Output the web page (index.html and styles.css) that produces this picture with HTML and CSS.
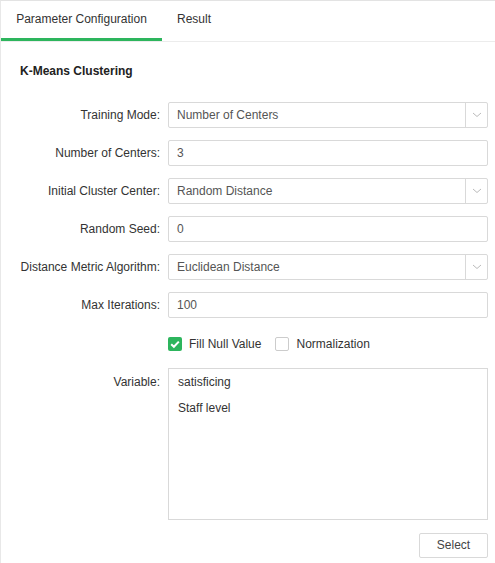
FILE: index.html
```html
<!DOCTYPE html>
<html>
<head>
<meta charset="utf-8">
<link rel="stylesheet" href="styles.css">
</head>
<body>
<div class="panel">
  <div class="tabs">
    <div class="tab active">Parameter Configuration</div>
    <div class="tab">Result</div>
  </div>
  <div class="content">
    <div class="title">K-Means Clustering</div>
    <div class="form">
      <div class="row">
        <div class="label">Training Mode:</div>
        <div class="field select"><span class="val">Number of Centers</span><span class="arrow"><svg width="10" height="6" viewBox="0 0 10 6"><path d="M1 1 L5 4.5 L9 1" fill="none" stroke="#bbb" stroke-width="1"/></svg></span></div>
      </div>
      <div class="row">
        <div class="label">Number of Centers:</div>
        <div class="field"><span class="val">3</span></div>
      </div>
      <div class="row">
        <div class="label">Initial Cluster Center:</div>
        <div class="field select"><span class="val">Random Distance</span><span class="arrow"><svg width="10" height="6" viewBox="0 0 10 6"><path d="M1 1 L5 4.5 L9 1" fill="none" stroke="#bbb" stroke-width="1"/></svg></span></div>
      </div>
      <div class="row">
        <div class="label">Random Seed:</div>
        <div class="field"><span class="val">0</span></div>
      </div>
      <div class="row">
        <div class="label">Distance Metric Algorithm:</div>
        <div class="field select"><span class="val">Euclidean Distance</span><span class="arrow"><svg width="10" height="6" viewBox="0 0 10 6"><path d="M1 1 L5 4.5 L9 1" fill="none" stroke="#bbb" stroke-width="1"/></svg></span></div>
      </div>
      <div class="row">
        <div class="label">Max Iterations:</div>
        <div class="field"><span class="val">100</span></div>
      </div>
      <div class="row checks">
        <div class="label"></div>
        <div class="checkgroup">
          <span class="check on"><svg width="14" height="14" viewBox="0 0 14 14"><path d="M3.2 7.2 L5.9 9.8 L10.8 4.6" fill="none" stroke="#fff" stroke-width="2"/></svg></span>
          <span class="ctext">Fill Null Value</span>
          <span class="check"></span>
          <span class="ctext">Normalization</span>
        </div>
      </div>
      <div class="row var">
        <div class="label">Variable:</div>
        <div class="listbox">
          <div class="item">satisficing</div>
          <div class="item">Staff level</div>
        </div>
      </div>
      <div class="actions">
        <div class="btn">Select</div>
      </div>
    </div>
  </div>
</div>
</body>
</html>
```
FILE: styles.css
```css
html, body {
  margin: 0;
  padding: 0;
  background: #fff;
}
body {
  font-family: "Liberation Sans", Arial, sans-serif;
  font-size: 12px;
  color: #333;
}
.panel {
  width: 495px;
  height: 563px;
  box-sizing: border-box;
  border-top: 1px solid #e3e3e3;
  border-left: 1px solid #e8e8e8;
}
.tabs {
  display: flex;
  height: 40px;
  border-bottom: 1px solid #ececec;
}
.tab {
  padding: 0 15px;
  line-height: 36px;
  height: 37px;
  border-bottom: 3px solid transparent;
  color: #333;
}
.tab.active {
  width: 131px;
  text-align: center;
  border-bottom-color: #2db55d;
}
.content {
  padding: 21px 7px 0 19px;
}
.title {
  font-weight: bold;
  line-height: 16px;
  height: 16px;
  color: #222;
}
.form {
  margin-top: 23px;
  display: flex;
  flex-direction: column;
  gap: 12px;
}
.row {
  display: flex;
  align-items: center;
  gap: 8px;
}
.label {
  width: 140px;
  flex: none;
  text-align: right;
  color: #333;
}
.field {
  flex: 1;
  height: 24px;
  border: 1px solid #d9d9d9;
  border-radius: 2px;
  display: flex;
  align-items: center;
  color: #555;
}
.field .val {
  flex: 1;
  padding-left: 8px;
}
.field .arrow {
  width: 21px;
  height: 24px;
  border-left: 1px solid #d9d9d9;
  display: flex;
  align-items: center;
  justify-content: center;
}
.checks {
  margin-top: 4px;
  height: 20px;
}
.checkgroup {
  display: flex;
  align-items: center;
}
.check {
  width: 12px;
  height: 12px;
  border: 1px solid #ccc;
  border-radius: 2px;
  flex: none;
  display: flex;
  align-items: center;
  justify-content: center;
}
.check.on {
  width: 14px;
  height: 14px;
  border: none;
  background: #2db55d;
}
.ctext {
  margin-left: 7px;
  margin-right: 14px;
  color: #333;
}
.var {
  align-items: flex-start;
  margin-top: 2px;
}
.var .label {
  padding-top: 7px;
}
.listbox {
  flex: 1;
  height: 150px;
  border: 1px solid #d9d9d9;
  padding: 0 0 0 9px;
  box-sizing: content-box;
}
.item {
  line-height: 26px;
  color: #333;
}
.actions {
  display: flex;
  justify-content: flex-end;
  margin-top: 1px;
}
.btn {
  width: 67px;
  height: 23px;
  border: 1px solid #d9d9d9;
  border-radius: 2px;
  text-align: center;
  line-height: 23px;
  color: #444;
}
```
